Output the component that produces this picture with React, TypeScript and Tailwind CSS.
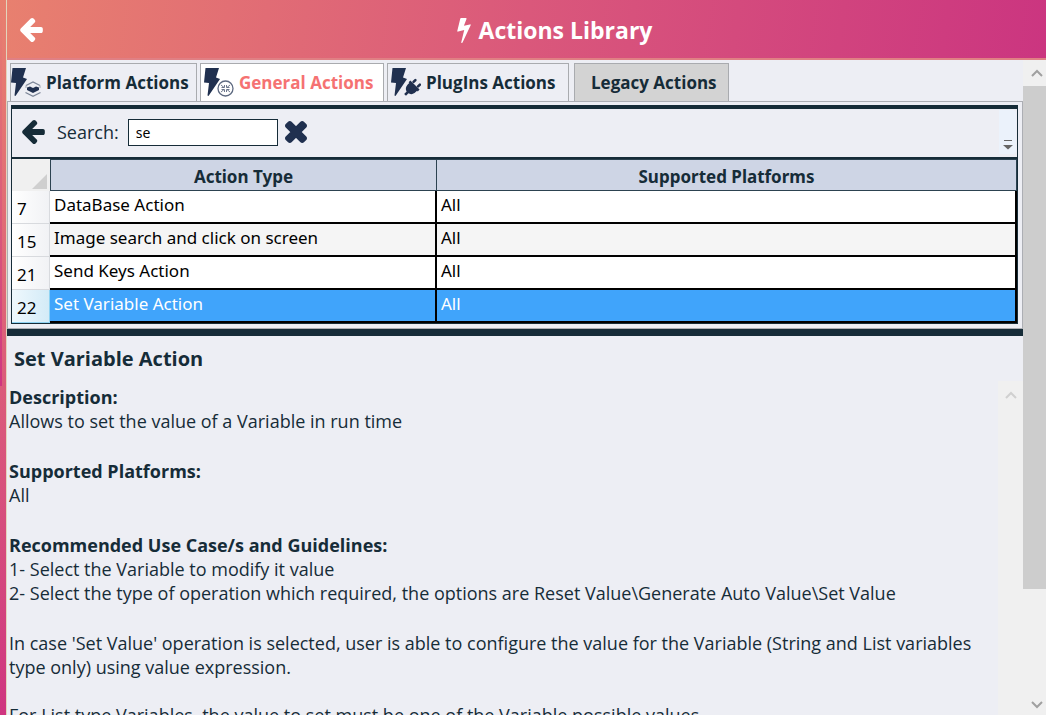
import { useState } from "react";
import type { ReactNode } from "react";

const NAVY = "#20304f";

function ArrowLeft({ className }: { className: string }) {
  return (
    <svg viewBox="0 180 1536 1560" className={className} fill="currentColor" aria-hidden="true">
      <path d="M1536 896v128q0 53-32.5 90.5t-84.5 37.5h-704l293 294q38 36 38 90t-38 90l-75 76q-37 37-90 37-52 0-91-37l-651-652q-37-37-37-90 0-52 37-91l651-650q38-38 91-38 52 0 90 38l75 74q38 38 38 91t-38 91l-293 293h704q52 0 84.5 37.5t32.5 90.5z" />
    </svg>
  );
}

function Bolt({ className }: { className: string }) {
  return (
    <svg viewBox="0 128 896 1664" className={className} fill="currentColor" aria-hidden="true">
      <path d="M885 566q18 20 7 44l-540 1157q-13 25-42 25-4 0-14-2-17-5-25.5-19t-4.5-30l197-808-406 101q-4 1-12 1-18 0-31-11-18-15-13-39l201-825q4-14 16-23t28-9h328q19 0 32 12.5t13 29.5q0 8-5 18l-171 463 396-98q8-2 12-2 19 0 34 15z" />
    </svg>
  );
}

function Cross({ className }: { className: string }) {
  return (
    <svg viewBox="60 316 1288 1288" className={className} fill="currentColor" stroke="currentColor" strokeWidth="100" aria-hidden="true">
      <path d="M1298 1322q0 40-28 68l-136 136q-28 28-68 28t-68-28l-294-294-294 294q-28 28-68 28t-68-28l-136-136q-28-28-28-68t28-68l294-294-294-294q-28-28-28-68t28-68l136-136q28-28 68-28t68 28l294 294 294-294q28-28 68-28t68 28l136 136q28 28 28 68t-28 68l-294 294 294 294q28 28 28 68z" />
    </svg>
  );
}

function TabIcon({ children }: { children: ReactNode }) {
  return (
    <svg viewBox="0 0 30 31" className="h-[31px] w-[30px] shrink-0" aria-hidden="true">
      <path d="M1.500 1H15L12 10.500L16 12L4.500 29L3.500 28.500L5 16L0 15.500Z" fill={NAVY} />
      {children}
    </svg>
  );
}

const layers = (
  <g>
    <path d="M15 18.500l7-3.500 7 3.500" fill="none" stroke="#7b8597" strokeWidth="1.300" />
    <path d="M16 20.500l3-1 3 1.500 3-1.500 3 1v2.500L22 26l-6-3z" fill={NAVY} />
    <path d="M14.500 25.500l7.500 3.800 7.500-3.800" fill="none" stroke="#7b8597" strokeWidth="1.300" />
    <path d="M15 18.500v2.500M29 18.500v2.500" stroke="#9aa2b0" />
  </g>
);

const circle = (
  <g fill="none" stroke="#5d6980">
    <circle cx="21.500" cy="21.500" r="7.500" strokeWidth="1.300" />
    <path d="M17 18l3 2.500M20.500 18v2.500h-3M26 18l-3 2.500M22.500 18v2.500h3M17 25l3-2.500M20.500 25v-2.500h-3M26 25l-3-2.500M22.500 25v-2.500h3" strokeWidth="0.900" />
  </g>
);

const plug = (
  <g transform="translate(21.500 20.500) rotate(45)" fill={NAVY}>
    <path d="M-6.500 -3.500H6.500V-1H5.500V1C5.500 4.500 3.500 6.500 1.300 7V10.500H-1.300V7C-3.500 6.500 -5.500 4.500 -5.500 1V-1H-6.500Z" />
    <rect x="-4.500" y="-8.500" width="2.600" height="5" rx="1.200" />
    <rect x="1.900" y="-8.500" width="2.600" height="5" rx="1.200" />
  </g>
);

const tabs = [
  { label: "Platform Actions", icon: layers, style: "w-[187px] gap-[5px] bg-[#edeef4] text-[#162c38]" },
  { label: "General Actions", icon: circle, style: "ml-[3px] w-[184px] pl-[3px] gap-[5px] bg-white text-[#f57272]" },
  { label: "PlugIns Actions", icon: plug, style: "ml-[3px] w-[182px] pl-[3px] gap-[5px] bg-[#edeef4] text-[#162c38]" },
  { label: "Legacy Actions", icon: null, style: "ml-[5px] w-[155px] pl-4 bg-[#d3d3d3] text-[#162c38]" },
];

const rows = [
  { id: 7, name: "DataBase Action", platforms: "All" },
  { id: 15, name: "Image search and click on screen", platforms: "All" },
  { id: 21, name: "Send Keys Action", platforms: "All" },
  { id: 22, name: "Set Variable Action", platforms: "All" },
];

export default function App() {
  const [search, setSearch] = useState("se");
  const [selected, setSelected] = useState(22);

  return (
    <div className="flex h-screen overflow-hidden bg-[#edeef4] font-['Open_Sans',sans-serif] text-[#162c38]">
      <div className="w-[6px] shrink-0 bg-linear-to-b from-[#e8806f] to-[#cf3580]">
        <div className="h-[54%] w-[2px] bg-linear-to-b from-[#e8806f] to-[#cf3580]" />
      </div>
      <div className="flex min-w-0 flex-1 flex-col border-l border-[#e3d5bd]">
        <header className="flex h-[60px] shrink-0 items-center border-b-2 border-[#e08084] bg-linear-[98deg] from-[#e8806f] via-[#da587b] to-[#cb3580] pt-[2px] text-white">
          <button type="button" aria-label="Back" className="ml-3 h-6 w-6">
            <ArrowLeft className="h-6 w-6" />
          </button>
          <h1 className="flex flex-1 items-center justify-center gap-2 pl-9 text-[23px] leading-8 font-bold">
            <Bolt className="h-[25px] w-[14px]" />
            Actions Library
          </h1>
          <span className="w-4" />
        </header>

        <div className="flex min-h-0 flex-1">
          <div className="flex min-w-0 flex-1 flex-col">
            <div role="tablist" className="flex h-[41px] shrink-0 items-stretch pt-[3px] pl-[3px]">
              {tabs.map((tab, i) => (
                <button
                  key={tab.label}
                  type="button"
                  role="tab"
                  aria-selected={i === 1}
                  className={`flex items-center overflow-hidden border border-b-0 border-[#a9abaf] text-[17px] font-bold whitespace-nowrap ${tab.style}`}
                >
                  {tab.icon && <TabIcon>{tab.icon}</TabIcon>}
                  {tab.label}
                </button>
              ))}
            </div>

            <section className="shrink-0 border border-[#acaeb4] p-[3px] pr-1 pb-1">
              <div className="border border-t-4 border-[#162c38]">
                <div className="flex h-12 items-center pb-[2px]">
                  <button type="button" aria-label="Previous" className="ml-[9px] h-6 w-6">
                    <ArrowLeft className="h-6 w-6" />
                  </button>
                  <label htmlFor="search" className="ml-3 text-lg">
                    Search:
                  </label>
                  <input
                    id="search"
                    value={search}
                    onChange={(e) => setSearch(e.target.value)}
                    className="ml-[9px] h-[27px] w-[150px] border border-[#162c38] bg-white px-[7px] font-['Noto_Sans',sans-serif] text-sm text-black outline-none"
                  />
                  <button type="button" aria-label="Clear search" onClick={() => setSearch("")} className="ml-[7px] text-[#20304f]">
                    <Cross className="h-[22px] w-[22px]" />
                  </button>
                  <span className="mr-px ml-auto flex h-11 w-[17px] items-end justify-center rounded-r bg-[#ebf2fb] pb-1">
                    <svg viewBox="0 0 10 10" className="h-[10px] w-[10px]" fill="#666" aria-hidden="true">
                      <path d="M1 0h8v1H1zM0 5h10L5 9.500z" />
                    </svg>
                  </span>
                </div>
                <table className="w-full table-fixed border-separate border-spacing-0 border-t-2 border-[#162c38] font-['Noto_Sans',sans-serif] text-[17px] leading-6 text-black">
                  <colgroup>
                    <col className="w-[38px]" />
                    <col className="w-[38.5%]" />
                    <col />
                  </colgroup>
                  <thead>
                    <tr className="h-8 text-[#162c38]">
                      <th aria-label="Row" className="bg-[#f0f0f0] p-0">
                        <svg viewBox="0 0 15 15" className="mt-3 ml-5 h-[15px] w-[15px]" fill="#cfcfcf" aria-hidden="true">
                          <path d="M15 0v15H0z" />
                        </svg>
                      </th>
                      <th className="border border-[#2c4250] bg-[#ced5e5] p-0 pt-1">Action Type</th>
                      <th className="border border-l-0 border-[#2c4250] bg-[#ced5e5] p-0 pt-1">Supported Platforms</th>
                    </tr>
                  </thead>
                  <tbody>
                    {rows.map((row, i) => {
                      const active = row.id === selected;
                      const tone = active ? "bg-[#40a4fb] text-white" : i % 2 ? "bg-[#f5f5f5]" : "bg-white";
                      return (
                        <tr key={row.id} onClick={() => setSelected(row.id)} className="h-[33px]">
                          <th
                            scope="row"
                            className={`border-r border-b bg-linear-to-r p-0 pt-1 pl-[5px] text-left font-normal ${
                              active ? "border-[#8fd3f3] from-[#eff8fd] to-[#d3ebf7]" : "border-[#d8dade] from-white to-[#f1f2f5]"
                            }`}
                          >
                            {row.id}
                          </th>
                          <td className={`border-r-2 border-b-2 border-black p-0 pb-1 pl-1 ${tone}`}>{row.name}</td>
                          <td className={`border-r-2 border-b-2 border-black p-0 pb-1 pl-1 ${tone}`}>{row.platforms}</td>
                        </tr>
                      );
                    })}
                  </tbody>
                </table>
              </div>
            </section>

            <div className="h-[7px] shrink-0 bg-[#162c38]" />

            <section className="flex min-h-0 flex-1 flex-col">
              <h2 className="mt-2 ml-[7px] text-xl leading-[30px] font-bold">Set Variable Action</h2>
              <div className="mt-[7px] flex min-h-0 flex-1">
                <div className="min-w-0 flex-1 overflow-hidden pt-1 pl-[2px] text-lg leading-6">
                  <h3 className="font-bold">Description:</h3>
                  <p>Allows to set the value of a Variable in run time</p>
                  <h3 className="mt-[26px] font-bold">Supported Platforms:</h3>
                  <p>All</p>
                  <h3 className="mt-[26px] font-bold">Recommended Use Case/s and Guidelines:</h3>
                  <p>1- Select the Variable to modify it value</p>
                  <p>2- Select the type of operation which required, the options are Reset Value\Generate Auto Value\Set Value</p>
                  <p className="mt-[26px]">
                    In case 'Set Value' operation is selected, user is able to configure the value for the Variable (String and List variables type only) using value expression.
                  </p>
                  <p className="mt-6">For List type Variables, the value to set must be one of the Variable possible values.</p>
                </div>
                <div className="w-[25px] shrink-0 bg-[#f0f0f0] pt-[10px]">
                  <svg viewBox="0 0 12 8" className="mx-auto h-2 w-3" fill="none" stroke="#d0d0d0" strokeWidth="2" aria-hidden="true">
                    <path d="M1 7l5-5 5 5" />
                  </svg>
                </div>
              </div>
            </section>
          </div>

          <div className="flex w-[23px] shrink-0 flex-col bg-[#f0f0f0]">
            <div className="flex h-[26px] items-center justify-center pl-1">
              <svg viewBox="0 0 12 8" className="h-2 w-3" fill="none" stroke="#a0a0a0" strokeWidth="2" aria-hidden="true">
                <path d="M1 7l5-5 5 5" />
              </svg>
            </div>
            <div className="flex-1">
              <div className="h-[82.6%] bg-[#cdcdcd]" />
            </div>
            <div className="flex h-5 items-center justify-center pl-1">
              <svg viewBox="0 0 12 8" className="h-2 w-3" fill="none" stroke="#a0a0a0" strokeWidth="2" aria-hidden="true">
                <path d="M1 1l5 5 5-5" />
              </svg>
            </div>
          </div>
        </div>
      </div>
    </div>
  );
}
